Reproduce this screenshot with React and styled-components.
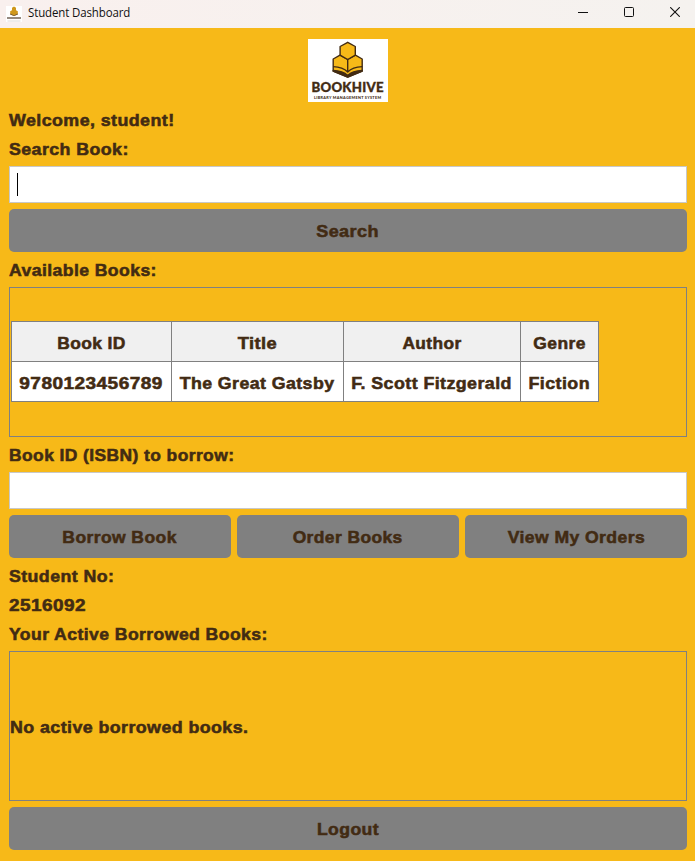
import React from "react";
import styled, { createGlobalStyle } from "styled-components";

const GlobalStyle = createGlobalStyle`
  *, *::before, *::after { box-sizing: border-box; }
  body { margin: 0; background: #f7b918; }
`;

const Window = styled.div`
  display: flex;
  flex-direction: column;
  height: 861px;
  overflow: hidden;
  background: #f7b918;
  color: #422b13;
  font: 700 17px/23px "Liberation Sans", Arial, sans-serif;
  letter-spacing: 0.4px;
  -webkit-text-stroke: 0.55px currentColor;
`;

const TitleBar = styled.header`
  display: flex;
  align-items: center;
  flex: none;
  height: 28px;
  padding-left: 6px;
  margin-right: -3px;
  background: linear-gradient(90deg, #f9f0ee, #f5f2ef);
  color: #111;
  -webkit-text-stroke: 0;
`;

const TitleText = styled.div`
  flex: 1;
  margin-left: 6px;
  padding-bottom: 2px;
  font: 400 12px/18px "Open Sans", "Noto Sans", sans-serif;
  transform: scaleX(0.955);
  transform-origin: left;
  letter-spacing: -0.12px;
`;

const WindowControl = styled.div`
  display: flex;
  align-items: center;
  justify-content: center;
  width: 46px;
  height: 28px;
  padding-bottom: 4px;
`;

const Content = styled.main`
  display: flex;
  flex-direction: column;
  gap: 6px;
  padding: 11px 8px 11px 9px;
`;

const LogoRow = styled.div`
  display: flex;
  justify-content: center;
  height: 63px;
  letter-spacing: 0;
  -webkit-text-stroke: 0;
`;

const Label = styled.div`
  height: 23px;
  padding-top: 1px;
  white-space: nowrap;
  transform: scaleX(${(p) => p.$stretch});
  transform-origin: left;
`;

const Wide = styled.span`
  display: inline-block;
  white-space: nowrap;
  transform: scaleX(${(p) => p.$stretch});
`;

const Input = styled.div`
  display: flex;
  align-items: center;
  height: 37px;
  padding-left: 7px;
  background: #fff;
  border: 1px solid #c8c8c8;
`;

const Caret = styled.span`
  width: 1px;
  height: 23px;
  background: #000;
`;

const Button = styled.button`
  flex: 1 0 auto;
  height: 43px;
  padding: 1px 0 0;
  border: 0;
  border-radius: 5px;
  background: #808080;
  color: inherit;
  font: inherit;
  letter-spacing: inherit;
  -webkit-text-stroke: inherit;
`;

const ButtonRow = styled.div`
  display: grid;
  grid-template-columns: repeat(3, 1fr);
  gap: 6px;
`;

const Panel = styled.section`
  display: flex;
  align-items: center;
  height: 150px;
  padding-left: ${(p) => p.$inset || 0}px;
  border: 1px solid #808080;
`;

const Table = styled.table`
  width: 588px;
  margin-top: -1px;
  table-layout: fixed;
  border-collapse: collapse;
  background: #fff;
`;

const Column = styled.col`
  width: ${(p) => p.$width}px;
`;

const Cell = styled.td`
  height: 40px;
  padding: 3px 0 0;
  border: 1px solid #808080;
  text-align: center;
  white-space: nowrap;
`;

const HeadCell = styled(Cell)`
  background: #f0f0f0;
`;

function Hive() {
  return (
    <g stroke="#422b13" strokeWidth="1.400" strokeLinejoin="round" fill="#f7b918">
      <path d="M32 16.200l7.700 4.300 7.700-4.300 6.800 3.800v12l-14.500 6-14.500-6V20z" />
      <path d="M39.700 3.300l7.600 4.200v8.700l-7.600 4.300-7.600-4.300V7.500z" />
      <path d="M39.700 20.500v12M25.200 27.600c6 .2 11 1.800 14.500 5.400 3.500-3.600 8.500-5.200 14.500-5.400" fill="none" />
      <path d="M25.200 31.500c6 .2 11 1.600 14.500 5 3.500-3.400 8.500-4.800 14.500-5v.5l-14.500 6-14.500-6z" fill="#422b13" />
    </g>
  );
}

function Logo() {
  return (
    <svg width="80" height="63" viewBox="0 0 80 63">
      <rect width="80" height="63" fill="#fff" />
      <Hive />
      <text x="3.500" y="52.700" textLength="72" fontFamily="Lato, sans-serif" fontWeight="900" fontSize="13.200" fill="#422b13" stroke="#422b13" strokeWidth=".35">BOOKHIVE</text>
      <text x="6" y="60" textLength="67" fontFamily="Lato, sans-serif" fontWeight="900" fontSize="3.800" fill="#422b13">LIBRARY MANAGEMENT SYSTEM</text>
    </svg>
  );
}

function AppIcon() {
  return (
    <svg width="16" height="16" viewBox="0 0 16 16">
      <rect width="16" height="16" fill="#fff" />
      <path d="M8 .5l2 1.300v2.500l1.800 1v3.200L8 10 4.200 8.500V5.300l1.800-1V1.800z" fill="#cf981c" />
      <path d="M4.200 7.500L8 9.300l3.800-1.800v1L8 10 4.200 8.500z" fill="#72583a" />
      <path d="M1 12h14" stroke="#958a80" strokeWidth="2" />
      <path d="M1.500 15h13" stroke="#dedad7" />
    </svg>
  );
}

function MinimizeIcon() {
  return <svg width="10" height="10"><path d="M0 5.500h10" stroke="#111" /></svg>;
}

function MaximizeIcon() {
  return <svg width="10" height="10"><rect x=".5" y=".5" width="9" height="9" rx="1" fill="none" stroke="#111" /></svg>;
}

function CloseIcon() {
  return <svg width="10" height="10"><path d="M.2.2l9.600 9.600M9.800.2L.2 9.800" stroke="#111" strokeWidth="1.100" /></svg>;
}

const columns = [
  { name: "Book ID", width: 160, stretch: 1.025 },
  { name: "Title", width: 172, stretch: 1.075 },
  { name: "Author", width: 177, stretch: 1.02 },
  { name: "Genre", width: 78, stretch: 1.025 },
];

const books = [
  [
    { text: "9780123456789", stretch: 1.12 },
    { text: "The Great Gatsby", stretch: 1.045 },
    { text: "F. Scott Fitzgerald", stretch: 1.05 },
    { text: "Fiction", stretch: 1.05 },
  ],
];

export default function App() {
  return (
    <>
      <GlobalStyle />
      <Window>
        <TitleBar>
          <AppIcon />
          <TitleText>Student Dashboard</TitleText>
          <WindowControl><MinimizeIcon /></WindowControl>
          <WindowControl><MaximizeIcon /></WindowControl>
          <WindowControl><CloseIcon /></WindowControl>
        </TitleBar>
        <Content>
          <LogoRow><Logo /></LogoRow>
          <Label $stretch={1.05}>Welcome, student!</Label>
          <Label $stretch={1.047}>Search Book:</Label>
          <Input><Caret /></Input>
          <Button><Wide $stretch={1.06}>Search</Wide></Button>
          <Label $stretch={1.036}>Available Books:</Label>
          <Panel $inset={1}>
            <Table>
              <colgroup>
                {columns.map((c) => <Column key={c.name} $width={c.width} />)}
              </colgroup>
              <thead>
                <tr>
                  {columns.map((c) => (
                    <HeadCell as="th" key={c.name}><Wide $stretch={c.stretch}>{c.name}</Wide></HeadCell>
                  ))}
                </tr>
              </thead>
              <tbody>
                {books.map((cells) => (
                  <tr key={cells[0].text}>
                    {cells.map((c) => (
                      <Cell key={c.text}><Wide $stretch={c.stretch}>{c.text}</Wide></Cell>
                    ))}
                  </tr>
                ))}
              </tbody>
            </Table>
          </Panel>
          <Label $stretch={1.026}>Book ID (ISBN) to borrow:</Label>
          <Input />
          <ButtonRow>
            <Button><Wide $stretch={1.03}>Borrow Book</Wide></Button>
            <Button><Wide $stretch={1.025}>Order Books</Wide></Button>
            <Button><Wide $stretch={1.035}>View My Orders</Wide></Button>
          </ButtonRow>
          <Label $stretch={1.045}>Student No:</Label>
          <Label $stretch={1.115}>2516092</Label>
          <Label $stretch={1.036}>Your Active Borrowed Books:</Label>
          <Panel><Label $stretch={1.049}>No active borrowed books.</Label></Panel>
          <Button><Wide $stretch={1.035}>Logout</Wide></Button>
        </Content>
      </Window>
    </>
  );
}
